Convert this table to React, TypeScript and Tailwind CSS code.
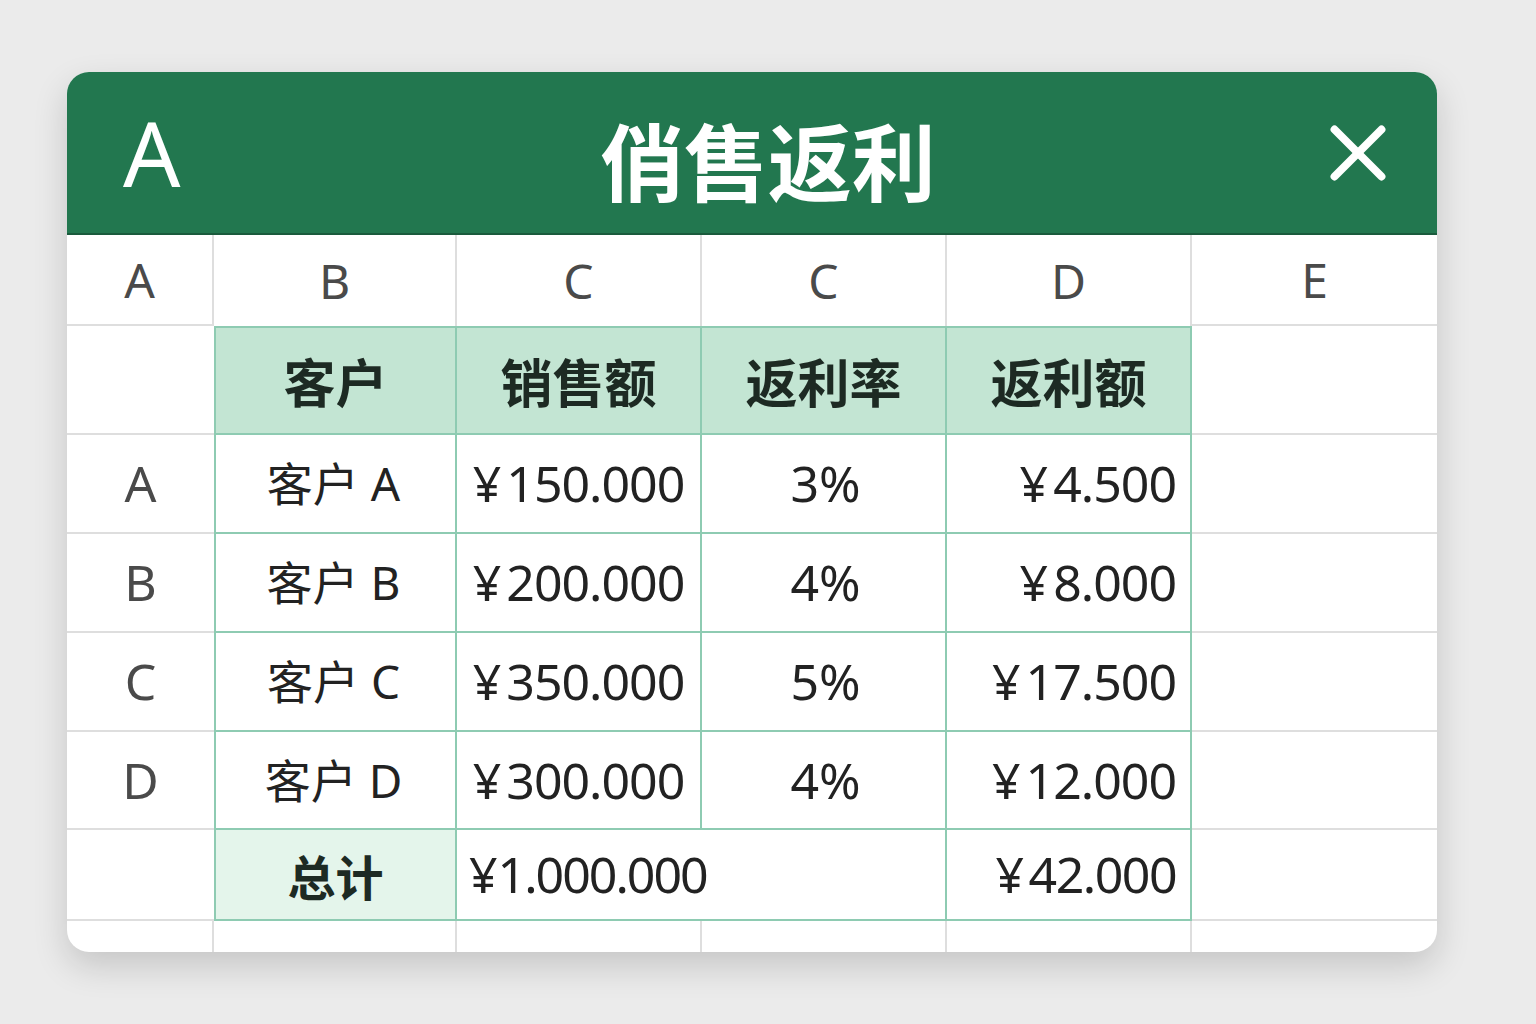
import { X } from "lucide-react";

const LATIN = "font-['Noto_Sans','Noto_Sans_CJK_SC',sans-serif]";
const CJK = "font-['Noto_Sans_CJK_SC','Noto_Sans',sans-serif]";

const ROWS = [
  { label: "A", name: "客户 A", sales: "150.000", rate: "3%", rebate: "4.500" },
  { label: "B", name: "客户 B", sales: "200.000", rate: "4%", rebate: "8.000" },
  { label: "C", name: "客户 C", sales: "350.000", rate: "5%", rebate: "17.500" },
  { label: "D", name: "客户 D", sales: "300.000", rate: "4%", rebate: "12.000" },
];

const GRAY = "border-[#dedede]";
const TEAL = "border-[#8ecbb2]";

function Money({ value, gap = "mr-[6px]" }: { value: string; gap?: string }) {
  return (
    <span>
      <span className={gap}>¥</span>
      {value}
    </span>
  );
}

export default function App() {
  return (
    <div className="min-h-screen bg-[#ebebeb] pt-[72px] pl-[67px]">
      <div className="w-[1370px] h-[880px] bg-white rounded-[22px] overflow-hidden shadow-[0_14px_34px_rgba(0,0,0,0.16)]">
        {/* Header */}
        <div className="h-[163px] bg-[#22774f] border-b-2 border-[#1a5a3c] flex items-center px-[56px] text-white">
          <span className={`${LATIN} text-[90px] leading-none font-normal -mt-[2px]`}>A</span>
          <h1 className={`${CJK} flex-1 text-center pl-[44px] text-[84px] leading-none font-bold mt-[12px]`}>
            俏售返利
          </h1>
          <X size={94} strokeWidth={2} className="text-white -mr-[24px]" />
        </div>

        {/* Sheet */}
        <div className="grid grid-cols-[147px_243px_245px_245px_245px_245px] grid-rows-[91px_109px_99px_99px_99px_98px_91px_31px] text-[#222]">
          {/* Column letters */}
          {["A", "B", "C", "C", "D", "E"].map((l, i) => (
            <div
              key={i}
              className={`${LATIN} flex items-center justify-center text-[48px] text-[#4a4a4a] ${GRAY} ${
                i < 5 ? "border-r-2" : ""
              } ${i === 0 || i === 5 ? "border-b-2" : ""}`}
            >
              {l}
            </div>
          ))}

          {/* Table header row */}
          <div className={`border-b-2 ${GRAY}`} />
          {["客户", "销售额", "返利率", "返利额"].map((h, i) => (
            <div
              key={h}
              className={`${CJK} flex items-center justify-center bg-[#c3e5d3] text-[52px] font-bold text-[#1d2a23] border-t-2 border-r-2 border-b-2 ${TEAL} ${
                i === 0 ? "border-l-2" : ""
              }`}
            >
              {h}
            </div>
          ))}
          <div className={`border-b-2 ${GRAY}`} />

          {/* Data rows */}
          {ROWS.map((r) => (
            <div key={r.label} className="contents">
              <div className={`${LATIN} flex items-center justify-center text-[50px] text-[#4a4a4a] border-b-2 ${GRAY}`}>
                {r.label}
              </div>
              <div className={`${LATIN} flex items-center justify-center pr-[4px] text-[46px] border-l-2 border-r-2 border-b-2 ${TEAL}`}>
                {r.name}
              </div>
              <div className={`${LATIN} flex items-center justify-center text-[50px] tracking-[-1px] border-r-2 border-b-2 ${TEAL}`}>
                <Money value={r.sales} />
              </div>
              <div className={`${LATIN} flex items-center justify-center pl-[4px] text-[50px] border-r-2 border-b-2 ${TEAL}`}>
                {r.rate}
              </div>
              <div className={`${LATIN} flex items-center justify-end pr-[14px] text-[50px] tracking-[-1px] border-r-2 border-b-2 ${TEAL}`}>
                <Money value={r.rebate} />
              </div>
              <div className={`border-b-2 ${GRAY}`} />
            </div>
          ))}

          {/* Total row */}
          <div className={`border-b-2 ${GRAY}`} />
          <div className={`${CJK} flex items-center justify-center bg-[#e4f5eb] text-[48px] font-bold text-[#1d2a23] border-l-2 border-r-2 border-b-2 ${TEAL}`}>
            总计
          </div>
          <div className={`${LATIN} col-span-2 flex items-center pl-[12px] text-[50px] tracking-[-2px] border-r-2 border-b-2 ${TEAL}`}>
            <Money value="1.000.000" gap="mr-[2px]" />
          </div>
          <div className={`${LATIN} flex items-center justify-end pr-[14px] text-[50px] tracking-[-1.5px] border-r-2 border-b-2 ${TEAL}`}>
            <Money value="42.000" />
          </div>
          <div className={`border-b-2 ${GRAY}`} />

          {/* Trailing partial row */}
          {[0, 1, 2, 3, 4, 5].map((i) => (
            <div key={i} className={`${GRAY} ${i < 5 ? "border-r-2" : ""}`} />
          ))}
        </div>
      </div>
    </div>
  );
}
